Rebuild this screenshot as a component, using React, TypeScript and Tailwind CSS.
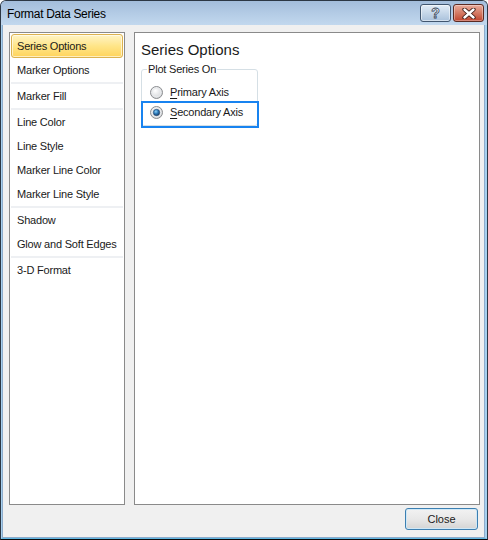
import React from "react";

const FONT = { fontFamily: '"Liberation Sans", Arial, sans-serif' };

function Radio({ checked }: { checked: boolean }) {
  return (
    <svg width="13" height="13" viewBox="0 0 13 13" className="shrink-0">
      <defs>
        <radialGradient id={checked ? "rgc" : "rgu"} cx="0.4" cy="0.35" r="0.7">
          <stop offset="0" stopColor="#ffffff" />
          <stop offset="1" stopColor="#cfd2d6" />
        </radialGradient>
        <radialGradient id="dot" cx="0.4" cy="0.35" r="0.7">
          <stop offset="0" stopColor="#8fd2f7" />
          <stop offset="0.5" stopColor="#2a78b8" />
          <stop offset="1" stopColor="#18385e" />
        </radialGradient>
      </defs>
      <circle cx="6.5" cy="6.5" r="6" fill={`url(#${checked ? "rgc" : "rgu"})`} stroke="#8b8d90" strokeWidth="1" />
      <circle cx="6.5" cy="6.5" r="4.3" fill="none" stroke="#e9ebed" strokeWidth="1" />
      {checked && <circle cx="6.5" cy="6.5" r="3.2" fill="url(#dot)" stroke="#25466e" strokeWidth="0.6" />}
    </svg>
  );
}

export default function App() {
  const items: (string | null)[] = [
    "Series Options",
    "Marker Options",
    null,
    "Marker Fill",
    null,
    "Line Color",
    "Line Style",
    "Marker Line Color",
    "Marker Line Style",
    null,
    "Shadow",
    "Glow and Soft Edges",
    null,
    "3-D Format",
  ];
  return (
    <div
      className="w-[488px] h-[540px] flex flex-col overflow-hidden rounded-t-[6px] border border-[#2c3744] border-b-[#0a0a0a] bg-[#b8d2ec]"
      style={FONT}
    >
      {/* Title bar */}
      <div className="h-[24px] shrink-0 flex items-start justify-between pl-[6px] pr-[3px] pt-[3px] bg-gradient-to-b from-[#a3bddb] via-[#b3cbe5] to-[#c2d8ee]">
        <div className="text-[12px] leading-[20px] text-black tracking-[-0.3px]">Format Data Series</div>
        <div className="flex gap-[2px]">
          <div className="w-[31px] h-[18px] rounded-[3px] border border-[#41566f] bg-gradient-to-b from-[#e3edf7] via-[#c6d7e9] to-[#a9c1db] flex items-center justify-center shadow-[inset_0_0_0_1px_rgba(255,255,255,0.5)]">
            <span className="text-[14px] leading-[14px] font-bold text-white [-webkit-text-stroke:0.8px_#34445a]">?</span>
          </div>
          <div className="w-[31px] h-[18px] rounded-[3px] border border-[#5b2a22] bg-gradient-to-b from-[#e9ab9b] via-[#d47a64] to-[#c0432d] flex items-center justify-center shadow-[inset_0_0_0_1px_rgba(255,255,255,0.35)]">
            <svg width="14" height="11" viewBox="0 0 14 11">
              <path d="M2.5 1.5 L11.5 9.5 M11.5 1.5 L2.5 9.5" stroke="#3a1a14" strokeWidth="4.2" strokeLinecap="round" />
              <path d="M2.5 1.5 L11.5 9.5 M11.5 1.5 L2.5 9.5" stroke="#ffffff" strokeWidth="2.4" strokeLinecap="round" />
            </svg>
          </div>
        </div>
      </div>

      {/* Body frame */}
      <div className="flex-1 flex flex-col border-l border-r-2 border-b border-[#a6d0ef] border-b-[#5fb6e2]">
        <div className="flex-1 flex flex-col bg-[#f0f0f0] border-l border-r border-b border-[#8eaccb] pl-[6px] pr-[4px] pt-[7px] pb-[7px]">
          <div className="h-[473px] flex gap-[9px]">
            {/* Left list */}
            <div className="w-[116px] border border-[#8a8a8a] bg-white p-[1px] flex flex-col">
              {items.map((it, i) =>
                it === null ? (
                  <div key={i} className="h-[2px] mx-0 bg-[#eef0f3]" />
                ) : i === 0 ? (
                  <div
                    key={i}
                    className="h-[24px] flex items-center pl-[5px] rounded-[3px] border border-[#dcb24f] bg-gradient-to-b from-[#fff4c4] via-[#ffe588] to-[#ffd45a] shadow-[inset_0_0_0_1px_rgba(255,255,255,0.6)] text-[11px] tracking-[-0.2px] text-[#1a1a1a]"
                  >
                    {it}
                  </div>
                ) : (
                  <div key={i} className="h-[24px] flex items-center pl-[6px] text-[11px] tracking-[-0.2px] text-[#1a1a1a]">
                    {it}
                  </div>
                )
              )}
            </div>

            {/* Right panel */}
            <div className="w-[346px] border border-[#8a8a8a] bg-white pl-[6px] pt-[8px]">
              <div className="text-[15px] leading-[18px] text-[#1a1a1a]">Series Options</div>
              <div className="relative mt-[4px] w-[118px]">
                <fieldset className="w-[117px] border border-[#d5dfe5] rounded-[3px] pb-[3px] m-0 p-0">
                  <legend className="ml-[5px] px-[1px] text-[11px] leading-[13px] tracking-[-0.2px] text-[#1a1a1a]">Plot Series On</legend>
                  <div className="pt-[6px]">
                    <div className="h-[20px] flex items-center pl-[8px] gap-[7px] text-[11px] tracking-[-0.2px] text-[#1a1a1a]">
                      <Radio checked={false} />
                      <span>
                        <span className="underline underline-offset-[2px]">P</span>rimary Axis
                      </span>
                    </div>
                    <div className="h-[20px] flex items-center pl-[8px] gap-[7px] text-[11px] tracking-[-0.2px] text-[#1a1a1a]">
                      <Radio checked={true} />
                      <span>
                        <span className="underline underline-offset-[2px]">S</span>econdary Axis
                      </span>
                    </div>
                  </div>
                </fieldset>
                <div className="absolute left-0 top-[38px] w-[118px] h-[27px] border-2 border-[#1883f0] pointer-events-none" />
              </div>
            </div>
          </div>

          <div className="mt-[3px] flex justify-end pr-[2px]">
            <div className="w-[73px] h-[22px] rounded-[3px] border border-[#3c7fb1] bg-gradient-to-b from-[#f2f2f2] via-[#e8e8e8] to-[#d4d4d4] shadow-[inset_0_0_0_1px_#cfe8f7] flex items-center justify-center text-[11px] text-[#1a1a1a]">
              Close
            </div>
          </div>
        </div>
      </div>
    </div>
  );
}
